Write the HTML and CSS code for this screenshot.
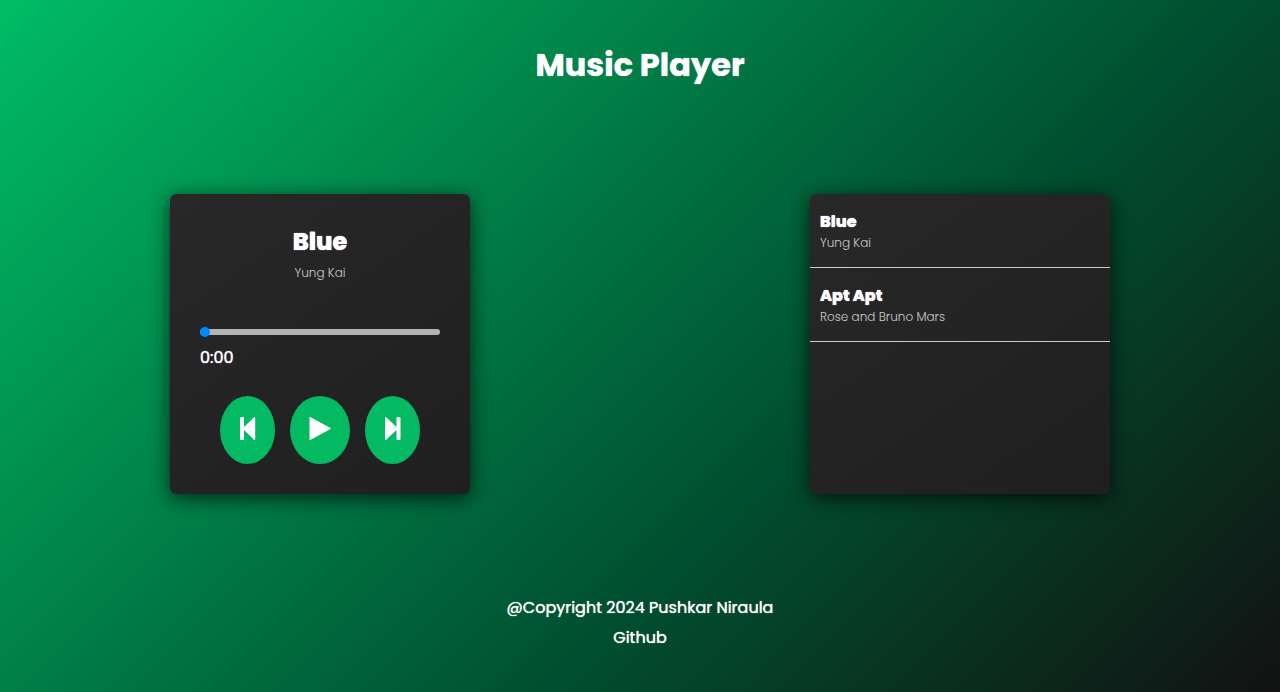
FILE: index.html
```html
<!DOCTYPE html>
<html lang="en">
<head>
<meta charset="utf-8">
<title>Music Player</title>
<link rel="stylesheet" href="styles.css">
</head>
<body>
<header class="header"><h1 class="title">Music Player</h1></header>
<main class="main">
  <section class="column">
    <div class="card player">
      <h2 class="song">Blue</h2>
      <p class="artist">Yung Kai</p>
      <input class="progress" type="range" min="0" max="100" value="0" aria-label="Progress">
      <p class="time">0:00</p>
      <div class="controls">
        <button class="button" type="button" aria-label="Previous"><svg class="icon" viewBox="0 0 24 24"><path d="M4 2Q4 1 5 1H7Q8 1 8 2V11L18 1.300Q19.200 .3 19.200 2V23Q19.200 24.700 18 23.700L8 14V23Q8 24 7 24H5Q4 24 4 23Z"/></svg></button>
        <button class="button play" type="button" aria-label="Play"><svg class="icon" viewBox="0 0 24 24"><path d="M1.500 1.500Q1.500 .8 2.200 1.100L22.500 12Q23.200 12.500 22.500 13L2.200 23.900Q1.500 24.200 1.500 23.500Z"/></svg></button>
        <button class="button" type="button" aria-label="Next"><svg class="icon" viewBox="0 0 24 24"><path d="M19.500 2Q19.500 1 18.500 1H16.500Q15.500 1 15.500 2V11L5.200 1.300Q4 .3 4 2V23Q4 24.700 5.200 23.700L15.500 14V23Q15.500 24 16.500 24H18.500Q19.500 24 19.500 23Z"/></svg></button>
      </div>
    </div>
  </section>
  <section class="column">
    <ul class="card playlist">
      <li class="track"><h3 class="track-name">Blue</h3><p class="artist">Yung Kai</p></li>
      <li class="track"><h3 class="track-name">Apt Apt</h3><p class="artist">Rose and Bruno Mars</p></li>
    </ul>
  </section>
</main>
<footer class="footer">
  <p>@Copyright 2024 Pushkar Niraula</p>
  <a class="link" href="#">Github</a>
</footer>
</body>
</html>
```
FILE: styles.css
```css
* { margin: 0; padding: 0; box-sizing: border-box; }
body {
  min-height: 100vh;
  display: flex;
  flex-direction: column;
  font-family: Poppins, Inter, sans-serif;
  color: #fff;
  background: linear-gradient(135deg, #00bc65, #005030 62%, #121212);
}
.title, .song, .track-name, .time, .footer { text-shadow: 0 0 1px #fff; }
.header { padding: 40px 0; text-align: center; }
.title { font-size: 32px; line-height: 50px; font-weight: 700; }
.main { flex: 1; display: grid; grid-template-columns: 1fr 1fr; align-items: center; }
.column { display: flex; justify-content: center; }
.card {
  width: 300px;
  min-height: 300px;
  border-radius: 6px;
  background: linear-gradient(145deg, #282828, #1f1f1f);
  box-shadow: 0 4px 20px rgba(0, 0, 0, 0.7);
}
.player { padding: 30px; display: flex; flex-direction: column; }
.song { text-align: center; font-size: 24px; line-height: 36px; font-weight: 800; }
.artist { font-size: 12px; line-height: 18px; font-weight: 300; color: #ccc; }
.player .artist { margin-top: 4px; text-align: center; }
.progress {
  appearance: none;
  width: 100%;
  height: 6px;
  margin-top: 47px;
  border-radius: 3px;
  background: #b3b3b3;
}
.progress::-webkit-slider-thumb {
  appearance: none;
  width: 10px;
  height: 10px;
  border-radius: 50%;
  background: #0088ff;
}
.time { margin-top: 11px; font-size: 16px; line-height: 24px; font-weight: 400; }
.controls { margin-top: 26px; display: flex; justify-content: center; gap: 15px; }
.button {
  width: 55px;
  height: 68px;
  padding-bottom: 4px;
  border: 0;
  border-radius: 50%;
  background: #03ba63;
  display: flex;
  align-items: center;
  justify-content: center;
}
.play { width: 60px; }
.icon { width: 24px; height: 24px; fill: #fff; }
.playlist { list-style: none; }
.track { height: 74px; padding: 16px 10px 0; border-bottom: 1px solid #ccc; }
.track-name { font-size: 16px; line-height: 24px; font-weight: 800; }
.footer { padding: 35px 0 39px; text-align: center; font-size: 16px; line-height: 30px; font-weight: 400; }
.link { color: inherit; text-decoration: none; }
```
